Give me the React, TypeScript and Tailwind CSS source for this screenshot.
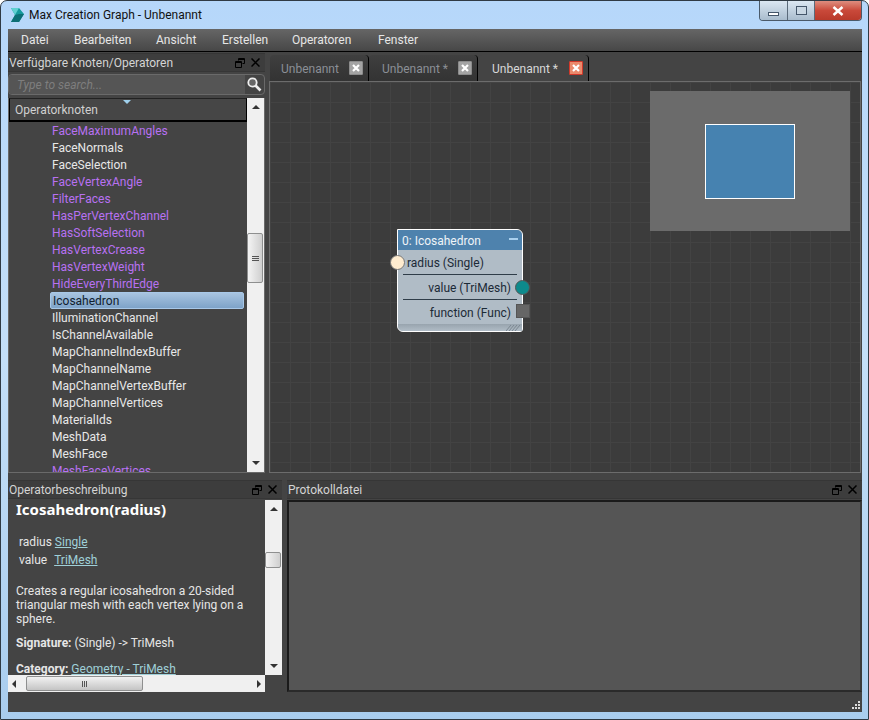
import React from 'react'

const operators: [string, boolean][] = [
  ['FaceMaximumAngles', true],
  ['FaceNormals', false],
  ['FaceSelection', false],
  ['FaceVertexAngle', true],
  ['FilterFaces', true],
  ['HasPerVertexChannel', true],
  ['HasSoftSelection', true],
  ['HasVertexCrease', true],
  ['HasVertexWeight', true],
  ['HideEveryThirdEdge', true],
  ['Icosahedron', false],
  ['IlluminationChannel', false],
  ['IsChannelAvailable', false],
  ['MapChannelIndexBuffer', false],
  ['MapChannelName', false],
  ['MapChannelVertexBuffer', false],
  ['MapChannelVertices', false],
  ['MaterialIds', false],
  ['MeshData', false],
  ['MeshFace', false],
  ['MeshFaceVertices', true],
]

const menus = [
  ['Datei', 'w-[53px]'],
  ['Bearbeiten', 'w-[82px]'],
  ['Ansicht', 'w-[66px]'],
  ['Erstellen', 'w-[70px]'],
  ['Operatoren', 'w-[86px]'],
  ['Fenster', 'w-[60px]'],
]

const PanelIcons = () => (
  <div className="flex items-center gap-[6px] pr-[5px]">
    <svg width="10" height="10" viewBox="0 0 10 10" fill="none" stroke="#000" strokeWidth="1">
      <path d="M3.5 2.5V.5h6v5h-2" />
      <path d="M.5 3.5h6v6h-6z" />
      <path d="M3 1.5h6M1 4.5h5" />
    </svg>
    <svg width="9" height="9" viewBox="0 0 9 9" stroke="#000" strokeWidth="1.5">
      <path d="M.5.5l8 8M8.5.5l-8 8" />
    </svg>
  </div>
)

const PanelHeader = ({ title }: { title: string }) => (
  <div className="h-[19px] shrink-0 flex items-center justify-between bg-[#3d3d3d] border-y border-[#363636] text-[#d4d4d4] pl-[1px]">
    <span className="pt-[1px]">{title}</span>
    <PanelIcons />
  </div>
)

const Arrow = ({ dir }: { dir: 'up' | 'down' | 'left' | 'right' }) => {
  const paths = {
    up: 'M0 5L4 1l4 4z',
    down: 'M0 1h8L4 5z',
    left: 'M5 0v8L1 4z',
    right: 'M1 0l4 4-4 4z',
  }
  const vertical = dir === 'up' || dir === 'down'
  return (
    <svg width={vertical ? 8 : 6} height={vertical ? 6 : 8} viewBox={vertical ? '0 0 8 6' : '0 0 6 8'} fill="#333">
      <path d={paths[dir]} />
    </svg>
  )
}

const VScroll = ({ thumbTop, thumbH }: { thumbTop: string; thumbH: string }) => (
  <div className="relative w-[17px] h-full bg-[#f0f0f0] flex flex-col justify-between items-center py-[6px]">
    <Arrow dir="up" />
    <Arrow dir="down" />
    <div className={`absolute left-0 w-[16px] ${thumbTop} ${thumbH} border border-[#8e8f8f] rounded-[2px] bg-gradient-to-r from-[#f4f4f4] to-[#cfcfcf] flex flex-col items-center justify-center gap-[1px]`}>
      {thumbH === 'h-[50px]' && (
        <>
          <div className="w-[7px] h-[1px] bg-[#555]" />
          <div className="w-[7px] h-[1px] bg-[#555]" />
          <div className="w-[7px] h-[1px] bg-[#555]" />
        </>
      )}
    </div>
  </div>
)

const TabClose = ({ active }: { active?: boolean }) => (
  <div className={`w-[14px] h-[14px] rounded-[1px] flex items-center justify-center ${active ? 'bg-[#ea8a6c] border border-[#d2382a]' : 'bg-[#a4a4a4] border border-[#8c8c8c]'}`}>
    <svg width="8" height="8" viewBox="0 0 8 8" stroke="#fff" strokeWidth="2.2">
      <path d="M1 1l6 6M7 1l-6 6" />
    </svg>
  </div>
)

const Tab = ({ label, w, pl, active }: { label: string; w: string; pl: string; active?: boolean }) => (
  <div className={`${w} ${pl} h-[26px] flex items-center justify-between pr-[5px] rounded-t-[4px] border-r border-black ${active ? 'bg-[#444] text-[#d8d8d8]' : 'bg-gradient-to-b from-[#3f3f3f] to-[#333] text-[#8b8f96]'}`}>
    <span className="pt-[1px]">{label}</span>
    <TabClose active={active} />
  </div>
)

const NodeRow = ({ children, right }: { children: React.ReactNode; right?: boolean }) => (
  <div className={`h-[24px] pt-[1px] flex items-center ${right ? 'justify-end pr-[11px]' : 'pl-[9px]'} text-[#1c2a36]`}>{children}</div>
)

export default function App() {
  return (
    <div className="relative w-[869px] h-[720px] overflow-hidden rounded-t-[7px] border border-[#2f3a44] bg-gradient-to-b from-[#b6d7fa] via-[#c4dff8] to-[#a9cdee] text-[12px] leading-[16px] [font-family:'Roboto','Noto_Sans',sans-serif]">
      {/* Title bar */}
      <div className="h-[28px] flex items-center pl-[8px]">
        <svg width="16" height="16" viewBox="0 0 16 16">
          <path d="M2 1h8l5 6-5 8H2l4-7z" fill="#159a9c" />
          <path d="M6 8l4-1 5 0-5 8H2z" fill="#0c6f75" />
          <path d="M2 1h8l-4 7z" fill="#5fd0d0" />
        </svg>
        <span className="ml-[4px] text-[#111]">Max Creation Graph - Unbenannt</span>
      </div>

      {/* Caption buttons */}
      <div className="absolute top-0 right-[6px] flex h-[20px] border border-t-0 border-[#4a5a6a] rounded-b-[4px] overflow-hidden">
        <div className="w-[28px] border-r border-[#5a6a7a] bg-gradient-to-b from-[#dbe7f2] to-[#a9bccd] flex items-end justify-center pb-[4px]">
          <div className="w-[11px] h-[4px] bg-white border border-[#44566a]" />
        </div>
        <div className="w-[27px] border-r border-[#5a6a7a] bg-gradient-to-b from-[#dbe7f2] to-[#a9bccd] flex items-center justify-center">
          <div className="w-[11px] h-[9px] border border-[#44566a] bg-[#c9d7e3]" />
        </div>
        <div className="w-[46px] bg-gradient-to-b from-[#dd8d7f] via-[#c9493a] to-[#b93a2b] flex items-center justify-center">
          <svg width="12" height="10" viewBox="0 0 12 10" stroke="#fff" strokeWidth="2.5">
            <path d="M1.5 1l9 8M10.5 1l-9 8" />
          </svg>
        </div>
      </div>

      {/* Client area */}
      <div className="ml-[7px] w-[854px] h-[683px] bg-[#444] flex flex-col">
        {/* Menu */}
        <div className="h-[23px] shrink-0 flex items-center pl-[13px] bg-gradient-to-b from-[#666] to-[#474747] border-b border-black text-[#e6e6e6]">
          {menus.map(([m, w]) => (
            <div key={m} className={w}>{m}</div>
          ))}
        </div>

        {/* Top split */}
        <div className="h-[421px] shrink-0 flex pt-[1px]">
          {/* Left panel */}
          <div className="w-[257px] shrink-0 flex flex-col">
            <PanelHeader title="Verfügbare Knoten/Operatoren" />
            <div className="h-[21px] shrink-0 mt-[2px] flex items-center justify-between border border-[#6a6a6a] rounded-[4px] bg-[#444] overflow-hidden">
              <span className="h-full flex-1 flex items-center pl-[8px] bg-[#555] italic text-[#7e7e7e]">Type to search...</span>
              <svg className="mx-[2px]" width="15" height="15" viewBox="0 0 15 15" fill="none">
                <circle cx="5.5" cy="5.5" r="4.2" stroke="#eee" strokeWidth="1.8" fill="#666" />
                <path d="M8.5 8.5l5 5" stroke="#eee" strokeWidth="2.6" />
              </svg>
            </div>
            <div className="mt-[3px] flex-1 min-h-0 flex border border-[#6a6a6a] border-t-0">
              <div className="flex-1 min-w-0 flex flex-col">
                <div className="relative h-[24px] shrink-0 flex items-center pl-[5px] bg-[#464646] border border-black border-t-[#222] border-b-2 text-[#d0d0d0]">
                  <span>Operatorknoten</span>
                  <div className="absolute top-[1px] left-[113px] w-0 h-0 border-x-[4px] border-x-transparent border-t-[4px] border-t-[#9fd0ec]" />
                </div>
                <div className="flex-1 min-h-0 overflow-hidden">
                  {operators.map(([name, purple]) => (
                    <div
                      key={name}
                      className={`h-[17px] flex items-center ml-[41px] mr-[3px] pl-[2px] rounded-[2px] whitespace-nowrap ${
                        name === 'Icosahedron'
                          ? 'border border-[#a8c8e8] bg-gradient-to-b from-[#a8c4e0] to-[#7ea3c8] text-[#10202e]'
                          : purple
                            ? 'text-[#b871f2]'
                            : 'text-[#e8e8e8]'
                      }`}
                    >
                      {name}
                    </div>
                  ))}
                </div>
              </div>
              <VScroll thumbTop="top-[135px]" thumbH="h-[50px]" />
            </div>
          </div>

          {/* Graph panel */}
          <div className="flex-1 min-w-0 flex flex-col pl-[4px] pt-[2px]">
            <div className="h-[26px] shrink-0 flex pl-[1px]">
              <Tab label="Unbenannt" w="w-[99px]" pl="pl-[11px]" />
              <Tab label="Unbenannt *" w="w-[109px]" pl="pl-[13px]" />
              <Tab label="Unbenannt *" w="w-[111px]" pl="pl-[14px]" active />
            </div>
            <div className="relative flex-1 min-h-0 border border-[#6c6c6c] mr-[1px] bg-[#3c3c3c] bg-[linear-gradient(#434343_1px,transparent_1px),linear-gradient(90deg,#434343_1px,transparent_1px)] bg-[size:20px_20px]">
              {/* Minimap */}
              <div className="absolute left-[380px] top-[9px] w-[200px] h-[140px] bg-[#6b6b6b]">
                <div className="absolute left-[55px] top-[33px] w-[90px] h-[75px] bg-[#4682b0] border border-white" />
              </div>

              {/* Node */}
              <div className="absolute left-[127px] top-[147px] w-[126px] h-[103px] flex flex-col border border-white rounded-tr-[6px] rounded-bl-[6px] rounded-br-[3px] bg-[#b0bcc6]">
                <div className="h-[20px] pt-[1px] shrink-0 flex items-center justify-between pl-[4px] pr-[4px] bg-[#4e82ad] rounded-tr-[5px] text-[#eef4f8]">
                  <span>0: Icosahedron</span>
                  <div className="w-[9px] h-[2px] mb-[4px] bg-[#a9d0ee]" />
                </div>
                <NodeRow>radius (Single)</NodeRow>
                <div className="mx-[5px] h-[1px] bg-[#2f3d49]" />
                <NodeRow right>value (TriMesh)</NodeRow>
                <div className="mx-[5px] h-[1px] bg-[#2f3d49]" />
                <NodeRow right>function (Func)</NodeRow>
                <div className="mt-auto h-[7px] flex justify-end items-center pr-[2px] bg-gradient-to-b from-[#98a4ae] to-[#b0bcc6] rounded-bl-[5px]">
                  <svg width="14" height="6" viewBox="0 0 14 6" stroke="#7b8791" strokeWidth="1">
                    <path d="M0 6l5-6M3 6l5-6M6 6l5-6M9 6l5-6" />
                  </svg>
                </div>
                <div className="absolute left-[-8px] top-[25px] w-[15px] h-[15px] rounded-full bg-[#ffeccf] border border-[#777]" />
                <div className="absolute right-[-8px] top-[50px] w-[15px] h-[15px] rounded-full bg-[#0d8a8c] border border-[#555]" />
                <div className="absolute right-[-8px] top-[74px] w-[14px] h-[14px] bg-[#666] border border-[#555]" />
              </div>
            </div>
          </div>
        </div>

        {/* Bottom split */}
        <div className="flex-1 min-h-0 flex pt-[7px]">
          <div className="w-[274px] shrink-0 flex flex-col">
            <PanelHeader title="Operatorbeschreibung" />
            <div className="h-[176px] shrink-0 flex pt-[1px]">
              <div className="flex-1 min-w-0 overflow-hidden pl-[8px] pr-[4px] text-[#e6e6e6]">
                <div className="mt-[1px] text-[15px] leading-[17px] font-bold text-white [font-family:'Noto_Sans',sans-serif]">Icosahedron(radius)</div>
                <div className="mt-[16px] pl-[3px] h-[18px]">radius <span className="underline text-[#9fd0d8]">Single</span></div>
                <div className="pl-[3px] h-[18px]">value <span className="ml-[4px] underline text-[#9fd0d8]">TriMesh</span></div>
                <div className="mt-[14px] leading-[14px]">Creates a regular icosahedron a 20-sided triangular mesh with each vertex lying on a sphere.</div>
                <div className="mt-[9px]"><b>Signature:</b> (Single) -&gt; TriMesh</div>
                <div className="mt-[10px]"><b>Category:</b> <span className="underline text-[#9fd0d8]">Geometry - TriMesh</span></div>
              </div>
              <VScroll thumbTop="top-[52px]" thumbH="h-[16px]" />
            </div>
            <div className="h-[17px] shrink-0 mr-[17px] bg-[#f0f0f0] flex items-center justify-between px-[3px] relative">
              <Arrow dir="left" />
              <Arrow dir="right" />
              <div className="absolute left-[18px] top-[1px] w-[117px] h-[15px] border border-[#8e8f8f] rounded-[2px] bg-gradient-to-b from-[#f2f2f2] to-[#c4c4c4] flex items-center justify-center gap-[1px]">
                <div className="w-[1px] h-[6px] bg-[#555]" />
                <div className="w-[1px] h-[6px] bg-[#555]" />
                <div className="w-[1px] h-[6px] bg-[#555]" />
              </div>
            </div>
          </div>
          <div className="flex-1 min-w-0 flex flex-col pl-[5px]">
            <PanelHeader title="Protokolldatei" />
            <div className="flex-1 min-h-0 mt-[1px] bg-[#555] border-2 border-[#1a1a1a] border-r-[#3a3a3a] border-b-[#2a2a2a]" />
          </div>
        </div>

        {/* Status bar */}
        <div className="relative h-[20px] shrink-0">
          <div className="absolute right-[2px] bottom-[3px] grid grid-cols-3 gap-[1px]">
            <div /><div /><div className="w-[2px] h-[2px] bg-[#ddd]" />
            <div /><div className="w-[2px] h-[2px] bg-[#ddd]" /><div className="w-[2px] h-[2px] bg-[#ddd]" />
            <div className="w-[2px] h-[2px] bg-[#ddd]" /><div className="w-[2px] h-[2px] bg-[#ddd]" /><div className="w-[2px] h-[2px] bg-[#ddd]" />
          </div>
        </div>
      </div>
    </div>
  )
}
